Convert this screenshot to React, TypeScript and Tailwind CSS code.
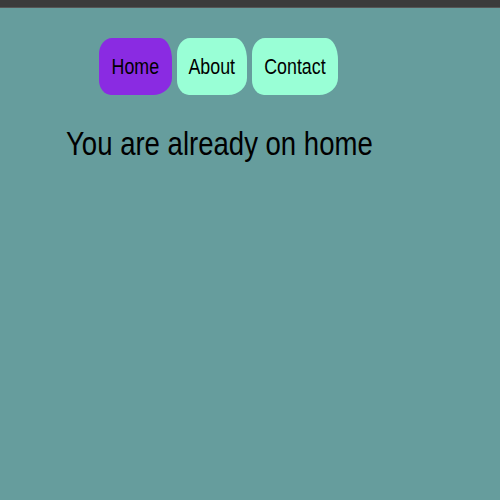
import React from "react";

const sans = { fontFamily: "'Liberation Sans', Arial, sans-serif" };

export default function App() {
  const btn =
    "flex items-center justify-center h-[57px] text-[22px] leading-none text-black rounded-tl-[13px_16px] rounded-tr-[12px_22px] rounded-br-[19px_17px] rounded-bl-[12px_15px]";
  const lbl = "inline-block scale-x-[0.81] origin-center whitespace-nowrap";
  return (
    <div className="w-[500px] h-[500px] bg-[#669d9d] flex flex-col" style={sans}>
      <div className="h-[8px] bg-[#3b3b3b] border-b border-[#555555]" />
      <nav className="flex gap-[5px] pl-[99px] pt-[30px]">
        <a className={`${btn} w-[73px] bg-[#8a2be2]`}><span className={lbl}>Home</span></a>
        <a className={`${btn} w-[70px] bg-[#99ffd6]`}><span className={lbl}>About</span></a>
        <a className={`${btn} w-[86px] bg-[#99ffd6]`}><span className={lbl}>Contact</span></a>
      </nav>
      <h1 className="pl-[66px] pt-[23px] text-[34px] font-normal text-black">
        <span className="inline-block scale-x-[0.81] origin-left whitespace-nowrap">You are already on home</span>
      </h1>
    </div>
  );
}
